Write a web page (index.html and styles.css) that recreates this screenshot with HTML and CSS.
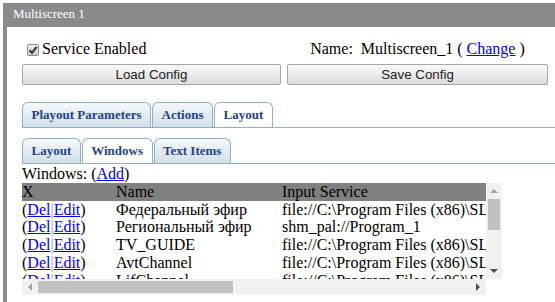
FILE: index.html
```html
<!DOCTYPE html>
<html>
<head>
<meta charset="utf-8">
<link rel="stylesheet" href="styles.css">
</head>
<body>
<div class="panel">
  <div class="title">Multiscreen 1</div>
  <div class="body">
    <div class="top-grid">
      <label class="svc"><span class="cb"><svg width="10" height="10" viewBox="0 0 10 10"><path d="M1.5 5.2 L4 7.8 L8.6 1.8" fill="none" stroke="#3a3a3a" stroke-width="2.2"/></svg></span>Service Enabled</label>
      <div class="name">Name:&nbsp; Multiscreen_1 ( <a href="#">Change</a> )</div>
      <button class="btn">Load Config</button>
      <button class="btn">Save Config</button>
    </div>
    <ul class="tabs tabs-main">
      <li class="tab">Playout Parameters</li>
      <li class="tab">Actions</li>
      <li class="tab active">Layout</li>
    </ul>
    <ul class="tabs tabs-sub">
      <li class="tab">Layout</li>
      <li class="tab active">Windows</li>
      <li class="tab">Text Items</li>
    </ul>
    <div class="windows">Windows: (<a href="#">Add</a>)</div>
    <div class="scroller">
      <div class="viewport">
        <table class="grid">
          <colgroup><col class="c1"><col class="c2"><col class="c3"></colgroup>
          <thead><tr><th>X</th><th>Name</th><th>Input Service</th></tr></thead>
          <tbody>
            <tr><td>(<a href="#">Del</a><span class="sep">|</span><a href="#">Edit</a>)</td><td>Федеральный эфир</td><td>file://C:\Program Files (x86)\SLIntegration\media\federal.ts</td></tr>
            <tr><td>(<a href="#">Del</a><span class="sep">|</span><a href="#">Edit</a>)</td><td>Региональный эфир</td><td>shm_pal://Program_1</td></tr>
            <tr><td>(<a href="#">Del</a><span class="sep">|</span><a href="#">Edit</a>)</td><td>TV_GUIDE</td><td>file://C:\Program Files (x86)\SLIntegration\media\tv_guide.ts</td></tr>
            <tr><td>(<a href="#">Del</a><span class="sep">|</span><a href="#">Edit</a>)</td><td>AvtChannel</td><td>file://C:\Program Files (x86)\SLIntegration\media\avt.ts</td></tr>
            <tr><td>(<a href="#">Del</a><span class="sep">|</span><a href="#">Edit</a>)</td><td>LifChannel</td><td>file://C:\Program Files (x86)\SLIntegration\media\lif.ts</td></tr>
            <tr><td>(<a href="#">Del</a><span class="sep">|</span><a href="#">Edit</a>)</td><td>Clock</td><td>file://C:\Program Files (x86)\SLIntegration\media\clock.ts</td></tr>
            <tr><td>(<a href="#">Del</a><span class="sep">|</span><a href="#">Edit</a>)</td><td>Weather</td><td>file://C:\Program Files (x86)\SLIntegration\media\weather.ts</td></tr>
            <tr><td>(<a href="#">Del</a><span class="sep">|</span><a href="#">Edit</a>)</td><td>Logo</td><td>file://C:\Program Files (x86)\SLIntegration\media\logo.ts</td></tr>
          </tbody>
        </table>
      </div>
      <div class="vbar">
        <span class="sbtn"><span class="arr arr-up"></span></span>
        <span class="vtrack"><span class="vthumb"></span></span>
        <span class="sbtn"><span class="arr arr-down"></span></span>
      </div>
      <div class="hbar">
        <span class="sbtn"><span class="arr arr-left"></span></span>
        <span class="htrack"><span class="hthumb"></span></span>
        <span class="sbtn"><span class="arr arr-right"></span></span>
      </div>
      <div class="corner"></div>
    </div>
  </div>
</div>
</body>
</html>
```
FILE: styles.css
```css
html, body {
  margin: 0;
  padding: 0;
}
body {
  width: 555px;
  height: 302px;
  overflow: hidden;
  background: #fff;
  font-family: "Liberation Serif", serif;
  font-size: 16px;
  color: #000;
}
a {
  color: #0000ee;
  text-decoration: underline;
}
.panel {
  margin: 3px 0 0 3px;
}
.title {
  box-sizing: border-box;
  height: 24px;
  padding: 3px 0 0 10px;
  background: #8a8a8a;
  color: #fff;
  font-family: "Liberation Serif", serif;
  font-size: 13px;
  line-height: 16px;
}
.body {
  border-left: 4px solid #8a8a8a;
  padding: 13px 7px 20px 15px;
  min-height: 242px;
}
.top-grid {
  display: grid;
  grid-template-columns: 259px 261px;
  column-gap: 6px;
  row-gap: 6px;
}
.svc {
  display: flex;
  align-items: center;
  height: 18px;
  line-height: 18px;
}
.cb {
  box-sizing: border-box;
  width: 12px;
  height: 12px;
  margin: 1px 3px 0 5px;
  border: 1px solid #8c8c8c;
  border-radius: 2px;
  background: linear-gradient(#ededed, #cfcfcf);
  display: flex;
  align-items: center;
  justify-content: center;
}
.cb svg {
  display: block;
}
.name {
  text-align: center;
  line-height: 18px;
}
.btn {
  height: 21px;
  padding: 0;
  border: 1px solid #a6a6a6;
  border-radius: 2px;
  background: linear-gradient(#fafafa, #dcdcdc);
  color: #222;
  font-family: "Liberation Sans", sans-serif;
  font-size: 13.33px;
}
.tabs {
  display: flex;
  gap: 1px;
  list-style: none;
  margin: 17px -7px 0 0;
  padding: 0;
  border-bottom: 1px solid #8fb1c6;
}
.tabs-sub {
  margin-top: 10px;
}
.tab {
  padding: 4px 8.5px 5px;
  border: 1px solid #8fb1c6;
  border-bottom: 0;
  border-radius: 6px 6px 0 0;
  background: linear-gradient(#f5f8fa, #d2dfe8);
  color: #23458a;
  font-family: "Liberation Serif", serif;
  font-weight: bold;
  font-size: 13px;
  line-height: 15px;
}
.tab.active {
  background: #fff;
}
.windows {
  line-height: 19px;
}
.scroller {
  display: grid;
  grid-template-columns: 464px 16px;
  grid-template-rows: 96px 16px;
  width: 480px;
}
.viewport {
  overflow: hidden;
}
.grid {
  border-collapse: collapse;
  table-layout: fixed;
  width: 1030px;
}
.c1 { width: 94px; }
.c2 { width: 166px; }
.grid th {
  background: #808080;
  font-weight: normal;
  text-align: left;
  padding: 0;
  line-height: 17.7px;
}
.grid td {
  padding: 0;
  line-height: 17.7px;
  white-space: nowrap;
}
.sep {
  color: #a0a0a0;
}
.vbar, .hbar {
  background: #f1f1f1;
  display: flex;
}
.vbar {
  flex-direction: column;
}
.sbtn {
  width: 16px;
  height: 16px;
  flex: none;
  display: flex;
  align-items: center;
  justify-content: center;
}
.vtrack, .htrack {
  flex: 1;
  display: flex;
}
.vtrack {
  flex-direction: column;
  align-items: center;
}
.htrack {
  align-items: center;
}
.vthumb {
  width: 12px;
  height: 31px;
  background: #c1c1c1;
}
.hthumb {
  width: 195px;
  height: 12px;
  background: #c1c1c1;
}
.arr {
  width: 0;
  height: 0;
}
.arr-up {
  border-left: 4px solid transparent;
  border-right: 4px solid transparent;
  border-bottom: 4px solid #a3a3a3;
}
.arr-down {
  border-left: 4px solid transparent;
  border-right: 4px solid transparent;
  border-top: 4px solid #505050;
}
.arr-left {
  border-top: 4px solid transparent;
  border-bottom: 4px solid transparent;
  border-right: 4px solid #a3a3a3;
}
.arr-right {
  border-top: 4px solid transparent;
  border-bottom: 4px solid transparent;
  border-left: 4px solid #505050;
}
.corner {
  background: #fff;
}
```
